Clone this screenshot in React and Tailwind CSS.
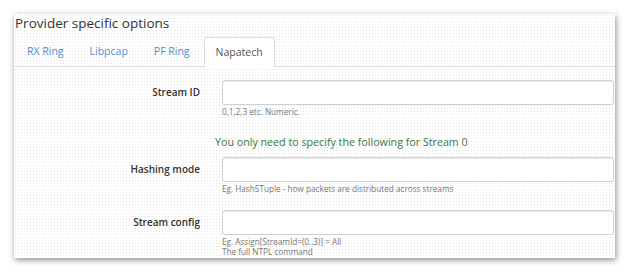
export default function App() {
  const tabs = ["RX Ring", "Libpcap", "PF Ring"];
  const input =
    "flex-1 mr-px h-[25px] rounded-[3px] border border-[#cfcfcf] bg-white shadow-[inset_0_1px_1px_rgba(0,0,0,0.075)]";
  return (
    <div className="w-[630px] h-[272px] bg-white pl-[14px] pt-[14px] font-['Open_Sans',sans-serif]">
      <div className="w-[601px] h-[244px] overflow-hidden bg-white bg-[radial-gradient(circle,#e4e4e4_0.7px,transparent_0.9px)] bg-[length:3px_3px] shadow-[1px_2px_6px_rgba(0,0,0,0.45)]">
        <div className="pl-px text-[13.5px] leading-[18px] text-[#333]">Provider specific options</div>
        <div className="mt-[5px] h-[30px] flex border-b border-[#ddd]">
          <div className="w-px" />
          {tabs.map((t) => (
            <div key={t} className="mr-[2px] px-[12px] h-[29px] flex items-center text-[10.5px] text-[#4a8fd4]">
              {t}
            </div>
          ))}
          <div className="px-[11px] h-[30px] flex items-center text-[10.5px] text-[#555] bg-white border border-b-0 border-[#ddd] rounded-t-[3px]">
            Napatech
          </div>
        </div>

        <div className="mt-[13px] flex items-center">
          <div className="w-[186px] text-right text-[10px] font-semibold text-[#333]">Stream ID</div>
          <div className="w-[22px]" />
          <div className={input} />
        </div>
        <div className="ml-[208px] mt-[1px] text-[8.2px] leading-[11px] text-[#777]">0,1,2,3 etc. Numeric.</div>

        <div className="ml-[201px] mt-[18px] text-[10.7px] leading-[14px] text-[#3c763d]">
          You only need to specify the following for Stream 0
        </div>

        <div className="mt-[8px] flex items-center">
          <div className="w-[186px] text-right text-[10px] font-semibold text-[#333]">Hashing mode</div>
          <div className="w-[22px]" />
          <div className={input} />
        </div>
        <div className="ml-[208px] mt-[1px] text-[8.2px] leading-[11px] text-[#777]">
          Eg. Hash5Tuple - how packets are distributed across streams
        </div>

        <div className="mt-[16px] flex items-center">
          <div className="w-[186px] text-right text-[10px] font-semibold text-[#333]">Stream config</div>
          <div className="w-[22px]" />
          <div className={input} />
        </div>
        <div className="ml-[208px] mt-[2px] text-[8.2px] leading-[10px] text-[#777]">
          Eg. Assign[StreamId=(0..3)] = All
          <br />
          The full NTPL command
        </div>
      </div>
    </div>
  );
}
